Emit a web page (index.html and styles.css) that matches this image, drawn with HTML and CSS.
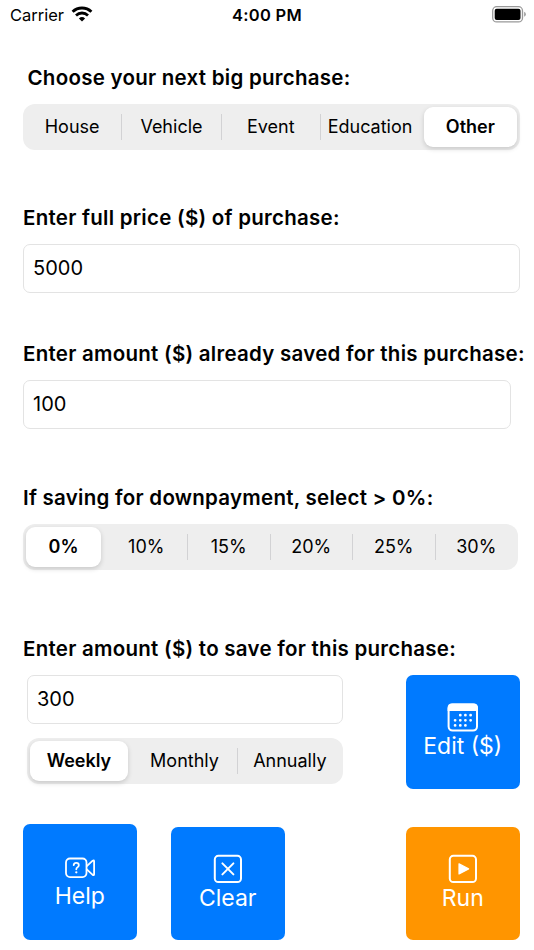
FILE: index.html
```html
<!DOCTYPE html>
<html lang="en">
<head>
    <meta charset="UTF-8">
    <meta name="viewport" content="width=device-width, initial-scale=1.0">
    <title>Savings Planner</title>
    <link rel="stylesheet" href="styles.css">
</head>
<body>
    <header class="status-bar">
        <div class="carrier">
            <span>Carrier</span>
            <svg class="wifi" width="22" height="16" viewBox="0 0 22 16">
                <path d="M1.6 5.7 A13.6 13.6 0 0 1 20.4 5.7" fill="none" stroke="#000" stroke-width="2.9"/>
                <path d="M5 9.4 A8.7 8.7 0 0 1 17 9.4" fill="none" stroke="#000" stroke-width="2.8"/>
                <path d="M7.9 12.4 A4.7 4.7 0 0 1 14.1 12.4 L11 15.5 Z"/>
            </svg>
        </div>
        <div class="time">4:00 PM</div>
        <div class="battery">
            <svg width="34" height="17" viewBox="0 0 34 17">
                <rect x="0.7" y="0.7" width="29.8" height="15.2" rx="4" fill="none" stroke="#999" stroke-width="1.3"/>
                <rect x="2.7" y="2.7" width="25.8" height="11.2" rx="2"/>
                <path d="M32 5.8 Q34 6.5 34 8.3 Q34 10.1 32 10.8 Z" fill="#aaa"/>
            </svg>
        </div>
    </header>

    <main class="container">
        <section class="category">
            <h2>Choose your next big purchase:</h2>
            <div class="segmented">
                <button type="button">House</button>
                <button type="button">Vehicle</button>
                <button type="button">Event</button>
                <button type="button">Education</button>
                <button type="button" class="selected">Other</button>
            </div>
        </section>

        <section class="price">
            <h2>Enter full price ($) of purchase:</h2>
            <input type="text" value="5000">
        </section>

        <section class="saved">
            <h2>Enter amount ($) already saved for this purchase:</h2>
            <input type="text" value="100">
        </section>

        <section class="downpayment">
            <h2>If saving for downpayment, select &gt; 0%:</h2>
            <div class="segmented">
                <button type="button" class="selected">0%</button>
                <button type="button">10%</button>
                <button type="button">15%</button>
                <button type="button">20%</button>
                <button type="button">25%</button>
                <button type="button">30%</button>
            </div>
        </section>

        <section class="saving">
            <h2>Enter amount ($) to save for this purchase:</h2>
            <div class="saving-row">
                <div class="saving-fields">
                    <input type="text" value="300">
                    <div class="segmented">
                        <button type="button" class="selected">Weekly</button>
                        <button type="button">Monthly</button>
                        <button type="button">Annually</button>
                    </div>
                </div>
                <button type="button" class="tile edit">
                    <svg width="32" height="29" viewBox="0 0 32 29">
                        <rect x="1.6" y="1.6" width="28.4" height="26" rx="4" fill="none" stroke="#fff" stroke-width="2"/>
                        <path d="M0.6 8 V5 Q0.6 0.6 5 0.6 H26.6 Q31 0.6 31 5 V8 Z" fill="#fff"/>
                        <path d="M13.3 12.2h.01 M18.4 12.2h.01 M23.6 12.2h.01 M8.1 17.3h.01 M13.3 17.3h.01 M18.4 17.3h.01 M23.6 17.3h.01 M8.1 22.4h.01 M13.3 22.4h.01 M18.4 22.4h.01" stroke="#fff" stroke-width="2.8" stroke-linecap="round"/>
                    </svg>
                    <span>Edit ($)</span>
                </button>
            </div>
        </section>

        <div class="actions">
            <button type="button" class="tile help">
                <svg width="32" height="22" viewBox="0 0 32 22" fill="none" stroke="#fff" stroke-width="1.8" stroke-linejoin="round" stroke-linecap="round">
                    <rect x="2" y="1.5" width="20.5" height="18.6" rx="4"/>
                    <path d="M22.8 9.2 L28.7 3.7 Q30.1 2.8 30.1 4.4 V17.2 Q30.1 18.8 28.7 17.9 L22.8 12.4"/>
                    <path d="M9.7 8.2 Q9.9 5.9 12.3 5.9 Q14.8 5.9 14.8 8.2 Q14.8 9.4 13.5 10.2 Q12.3 10.9 12.3 12.3"/>
                    <path d="M12.3 15.3h.01" stroke-width="2.3"/>
                </svg>
                <span>Help</span>
            </button>
            <button type="button" class="tile clear">
                <svg width="30" height="30" viewBox="0 0 30 30" fill="none" stroke="#fff" stroke-width="2" stroke-linecap="round">
                    <rect x="1.8" y="1.8" width="26.2" height="26.2" rx="3.6"/>
                    <path d="M9.4 9.4 L20.4 20.4 M20.4 9.4 L9.4 20.4"/>
                </svg>
                <span>Clear</span>
            </button>
            <button type="button" class="tile run">
                <svg width="30" height="30" viewBox="0 0 30 30">
                    <rect x="1.8" y="1.8" width="26.2" height="26.2" rx="3.6" fill="none" stroke="#fff" stroke-width="2"/>
                    <path d="M11 9.8 V20 L20.6 14.9 Z" fill="#fff" stroke="#fff" stroke-width="1.2" stroke-linejoin="round"/>
                </svg>
                <span>Run</span>
            </button>
        </div>
    </main>
</body>
</html>
```

FILE: styles.css
```css
* {
    box-sizing: border-box;
}
body {
    margin: 0;
    height: 950px;
    overflow: hidden;
    background-color: #fff;
    color: #000;
    font-family: Inter, "Liberation Sans", sans-serif;
}
button, input {
    font-family: inherit;
    color: inherit;
}
.status-bar {
    display: grid;
    grid-template-columns: 1fr auto 1fr;
    align-items: center;
    height: 30px;
    padding: 0 8px 0 10px;
    font-size: 16.5px;
}
.carrier {
    display: flex;
    align-items: center;
    gap: 7px;
}
.wifi {
    margin-top: -2px;
}
.time {
    margin-right: 2px;
    font-weight: 600;
    letter-spacing: 0.3px;
}
.battery {
    display: flex;
    justify-content: flex-end;
    margin-top: -2px;
}
.container {
    padding: 35px 14.5px 0 23px;
}
h2 {
    margin: 0 0 13px;
    font-size: 20.5px;
    font-weight: 600;
    line-height: 26px;
    letter-spacing: 0.26px;
    white-space: nowrap;
}
.category h2 {
    padding-left: 4.5px;
}
.category {
    height: 140px;
}
.price {
    height: 136px;
}
.saved {
    height: 144px;
}
.saved input {
    width: 488px;
}
.downpayment {
    height: 151px;
}
.downpayment .segmented {
    width: 495px;
}
input {
    display: block;
    width: 100%;
    height: 48.5px;
    padding: 0 9px;
    font-size: 20px;
    border: 1px solid #e3e3e3;
    border-radius: 7px;
    background-color: #fff;
}
.segmented {
    display: grid;
    grid-auto-flow: column;
    grid-auto-columns: minmax(0, 1fr);
    height: 45.5px;
    border-radius: 12px;
    background-color: #eeeeee;
}
.segmented button {
    margin: 10px 1px 10px -1px;
    padding: 0;
    border: none;
    border-left: 1px solid #d2d2d4;
    background: none;
    font-size: 18px;
}
.segmented button:first-child,
.segmented .selected + button {
    border-left-color: transparent;
}
.segmented .selected {
    margin: 3px 3px 3px 4px;
    border: none;
    border-radius: 9px;
    background-color: #fff;
    box-shadow: 0 2px 5px rgba(0, 0, 0, 0.16);
    font-weight: 600;
}
.segmented .selected:first-child {
    margin: 3px 4.5px 3px 3px;
}
.saving {
    height: 187.5px;
}
.saving-row {
    display: flex;
    justify-content: space-between;
}
.saving-fields {
    display: flex;
    flex-direction: column;
    gap: 14.5px;
    width: 316px;
    margin-left: 4px;
}
.tile {
    display: flex;
    flex-direction: column;
    align-items: center;
    justify-content: center;
    width: 113.5px;
    height: 113.5px;
    padding: 0;
    border: none;
    border-radius: 7px;
    background-color: #007aff;
    color: #fff;
    font-size: 23px;
    line-height: 28px;
}
.actions {
    display: flex;
    align-items: flex-end;
}
.help {
    height: 116.5px;
    gap: 3px;
    padding-top: 3px;
}
.clear {
    margin-left: 34.5px;
}
.run {
    margin-left: auto;
    background-color: #ff9500;
}
```
